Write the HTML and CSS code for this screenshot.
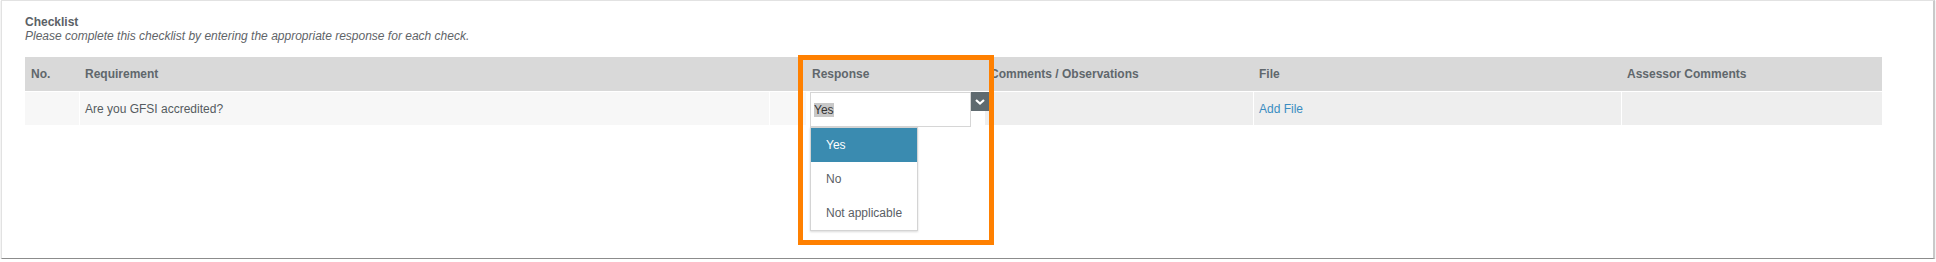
FILE: index.html
```html
<!DOCTYPE html>
<html lang="en">
<head>
  <meta charset="UTF-8" />
  <title>Checklist</title>
  <link rel="stylesheet" href="styles.css">
</head>
<body>

  <div class="panel">
    <h4 class="title">Checklist</h4>
    <p class="hint">Please complete this checklist by entering the appropriate response for each check.</p>

    <table class="checklist">
      <colgroup>
        <col class="c-no">
        <col class="c-req">
        <col class="c-blank">
        <col class="c-resp">
        <col class="c-comm">
        <col class="c-file">
        <col class="c-assess">
      </colgroup>
      <thead>
        <tr>
          <th>No.</th>
          <th>Requirement</th>
          <th></th>
          <th>Response</th>
          <th>Comments / Observations</th>
          <th>File</th>
          <th>Assessor Comments</th>
        </tr>
      </thead>
      <tbody>
        <tr>
          <td class="light"></td>
          <td class="light">Are you GFSI accredited?</td>
          <td class="light"></td>
          <td class="resp">
            <div class="combo">
              <div class="combo-input"><span class="selected">Yes</span></div>
              <span class="combo-btn">
                <svg width="10" height="6" viewBox="0 0 10 6"><polyline points="1,1 5,4.5 9,1" fill="none" stroke="#fff" stroke-width="2.2"/></svg>
              </span>
              <ul class="combo-list">
                <li class="active">Yes</li>
                <li>No</li>
                <li>Not applicable</li>
              </ul>
            </div>
          </td>
          <td></td>
          <td><a href="#" class="add-file">Add File</a></td>
          <td></td>
        </tr>
      </tbody>
    </table>

    <!-- highlight around the response column -->
    <div class="highlight"></div>
  </div>

</body>
</html>
```

FILE: styles.css
```css
body {
  margin: 0;
  font-family: "Liberation Sans", Arial, sans-serif;
  font-size: 12px;
  color: #555b60;
}
.panel {
  position: relative;
  box-sizing: border-box;
  height: 259px;
  margin: 0 1px;
  padding: 14px 51px 0 23px;
  background: #fff;
  border: 1px solid #e2e2e2;
  border-right: 2px solid #c9c9c9;
  border-bottom: 1px solid #8c8c8c;
  box-shadow: 0 1px 1px rgba(0,0,0,0.25);
}
.title {
  margin: 0;
  font-size: 12px;
  line-height: 14px;
  font-weight: bold;
  color: #5b6166;
}
.hint {
  margin: 0;
  font-style: italic;
  line-height: 14px;
  color: #5f6468;
}
.checklist {
  width: 1857px;
  margin-top: 14px;
  table-layout: fixed;
  border-collapse: separate;
  border-spacing: 0;
}
.c-no { width: 54px; }
.c-req { width: 690px; }
.c-blank { width: 37px; }
.c-resp { width: 178px; }
.c-comm { width: 269px; }
.c-file { width: 368px; }
.c-assess { width: 261px; }
.checklist th {
  height: 34px;
  padding: 0 6px;
  text-align: left;
  font-weight: bold;
  color: #60676c;
  background: #d9d9d9;
}
.checklist td {
  height: 33px;
  padding: 0 6px 0 5px;
  border-top: 1px solid #fff;
  border-left: 1px solid #fff;
  background: #eeeeee;
  vertical-align: middle;
}
.checklist td:first-child {
  border-left: none;
  padding-left: 6px;
}
.checklist td.light {
  background: #f7f7f7;
}
.checklist td.resp {
  position: relative;
  padding: 0 4px 0 3px;
  background: #fff;
  vertical-align: top;
}
.combo {
  position: relative;
  height: 35px;
  margin-bottom: -2px;
}
.combo-input {
  box-sizing: border-box;
  width: 161px;
  height: 35px;
  padding: 0 3px;
  border: 1px solid #d6d6d6;
  background: #fff;
  display: flex;
  align-items: center;
}
.selected {
  background: #c8c8c8;
  color: #333;
  line-height: 14px;
}
.combo-btn {
  position: absolute;
  left: 161px;
  top: 0;
  width: 18px;
  height: 19px;
  background: #5f6a6f;
  display: flex;
  align-items: center;
  justify-content: center;
}
.combo-list {
  position: absolute;
  left: 0;
  top: 35px;
  width: 108px;
  box-sizing: border-box;
  margin: 0;
  padding: 0;
  list-style: none;
  background: #fff;
  border: 1px solid #d4d4d4;
  box-shadow: 0 1px 2px rgba(0,0,0,0.15);
  z-index: 2;
}
.combo-list li {
  height: 34px;
  line-height: 34px;
  padding-left: 15px;
  color: #5a6065;
}
.combo-list li.active {
  background: #3a8bb0;
  color: #fff;
}
.add-file {
  color: #3a8dc2;
  text-decoration: none;
}
.highlight {
  position: absolute;
  left: 796px;
  top: 54px;
  width: 196px;
  height: 190px;
  box-sizing: border-box;
  border: 5px solid #ff8000;
  z-index: 3;
}
```
